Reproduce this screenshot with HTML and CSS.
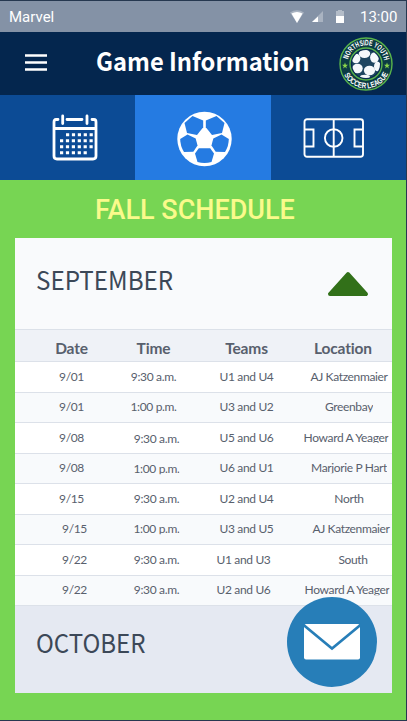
FILE: index.html
```html
<!DOCTYPE html>
<html lang="en">
<head>
<meta charset="utf-8">
<title>Game Information</title>
<link rel="stylesheet" href="styles.css">
</head>
<body>
<div class="screen">
  <div class="status">
    <span class="carrier">Marvel</span>
    <svg class="status-icons" width="60" height="16" viewBox="0 0 60 16">
      <path d="M0 3.5Q7 -1 14 3.5L7 14Z" fill="#a9b3c1"/>
      <path d="M1.5 4.5Q7 1.5 12.5 4.5L7 14Z" fill="#fff"/>
      <path d="M33 2V13H22Z" fill="#a9b3c1"/>
      <path d="M28 7.5V13H22Z" fill="#fff"/>
      <path d="M46 2H48V1H52V2H54V14H46Z" fill="#b3bcc8"/>
      <path d="M46 7H54V14H46Z" fill="#fff"/>
    </svg>
    <span class="clock">13:00</span>
  </div>
  <header class="header">
    <svg class="menu" width="22" height="17" viewBox="0 0 22 17"><path d="M0 1.5H22M0 8.5H22M0 15.5H22" stroke="#fff" stroke-width="2.4"/></svg>
    <h1>Game Information</h1>
    <svg class="logo" width="54" height="54" viewBox="0 0 54 54">
      <defs>
        <path id="arc-top" d="M9 30.5A18.4 18.4 0 1 1 45 30.5"/>
        <path id="arc-bottom" d="M2.6 27A24.4 24.4 0 0 0 51.4 27"/>
        <clipPath id="ball"><circle cx="27" cy="27" r="14"/></clipPath>
      </defs>
      <circle cx="27" cy="27" r="26" fill="#0b3b44" stroke="#58b34b" stroke-width="1.4"/>
      <circle cx="27" cy="27" r="16" fill="#092b50" stroke="#58b34b" stroke-width="1.4"/>
      <g clip-path="url(#ball)">
        <circle cx="27" cy="27" r="14" fill="#1d4560"/>
        <g fill="#f4f8fb">
          <ellipse cx="25.5" cy="16.8" rx="5.7" ry="4.2"/>
          <ellipse cx="17" cy="21.5" rx="4.4" ry="4.8"/>
          <ellipse cx="35.5" cy="20.5" rx="4.4" ry="5.2"/>
          <ellipse cx="18.5" cy="31.5" rx="5.2" ry="4.8"/>
          <ellipse cx="30.5" cy="33.5" rx="5.6" ry="4.8"/>
          <ellipse cx="38.5" cy="29.5" rx="3.5" ry="4.8"/>
          <ellipse cx="26" cy="39.7" rx="5" ry="2"/>
        </g>
      </g>
      <path d="M6 25.6L6.8 27.8H9L7.2 29.2L7.9 31.4L6 30.1L4.1 31.4L4.8 29.2L3 27.8H5.2ZM48 25.6L48.8 27.8H51L49.2 29.2L49.9 31.4L48 30.1L46.1 31.4L46.8 29.2L45 27.8H47.2Z" fill="#8bd64b"/>
      <text class="logo-text"><textPath href="#arc-top" startOffset="8" textLength="50" lengthAdjust="spacingAndGlyphs">NORTHSIDE YOUTH</textPath></text>
      <text class="logo-text"><textPath href="#arc-bottom" startOffset="11" textLength="55" lengthAdjust="spacingAndGlyphs">SOCCER LEAGUE</textPath></text>
    </svg>
  </header>
  <nav class="tabs">
    <div class="tab">
      <svg width="46" height="48" viewBox="0 0 46 48" fill="none" stroke="#fff" stroke-width="2.8" stroke-linecap="round">
        <path d="M6 5.5H4Q2 5.5 2 8V42Q2 45 5 45H41Q44 45 44 42V8Q44 5.5 42 5.5H40M15 5.5H30M10.7 2V9.5M35 2V9.5M2 14.5H44"/>
        <path d="M14 20.8H41M8 26.8H41M8 32.8H41M8 38.8H35" stroke-linecap="butt" stroke-width="3" stroke-dasharray="3.2 2.7"/>
      </svg>
    </div>
    <div class="tab active">
      <svg width="56" height="56" viewBox="0 0 56 56">
        <circle cx="27.5" cy="28" r="27.2" fill="#fff"/>
        <g fill="#257be2">
          <path d="M7.5 12L15.5 5L26.2 9.5V16.3L20 24L10 22Z"/>
          <path d="M47.5 12L39.5 5L28.8 9.5V16.3L35 24L45 22Z"/>
          <path d="M3.2 28L10.5 23.5L18.7 27.5L20.5 34.5L16.3 40.8L7 41Q3.2 35 3.2 28Z"/>
          <path d="M51.8 28L44.5 23.5L36.3 27.5L34.5 34.5L38.7 40.8L48 41Q51.8 35 51.8 28Z"/>
          <path d="M21.8 37.2H33.2L37 42.5L34.5 51Q27.5 53 20.5 51L18 42.5Z"/>
        </g>
      </svg>
    </div>
    <div class="tab">
      <svg width="62" height="40" viewBox="0 0 62 40" fill="none" stroke="#fff" stroke-width="1.9">
        <rect x="1.5" y="1.2" width="58.5" height="37.6" rx="2.5"/>
        <path d="M30.7 1V39M1.5 11.5H10.5V28.5H1.5M60 11.5H51.5V28.5H60"/>
        <circle cx="30.7" cy="20" r="8.8"/>
      </svg>
    </div>
  </nav>
  <main class="content">
    <h2>FALL SCHEDULE</h2>
    <section class="card">
      <div class="month">
        <h3>SEPTEMBER</h3>
        <svg width="42" height="26" viewBox="0 0 42 26"><path d="M21 3L39 23H3Z" fill="#327019" stroke="#327019" stroke-width="4" stroke-linejoin="round"/></svg>
      </div>
      <div class="row head"><span>Date</span><span class="l3">Time</span><span>Teams</span><span class="l6">Location</span></div>
      <div class="row"><span>9/01</span><span class="l3">9:30 a.m.</span><span>U1 and U4</span><span>AJ Katzenmaier</span></div>
      <div class="row"><span>9/01</span><span class="l3">1:00 p.m.</span><span>U3 and U2</span><span class="cut">Greenbay</span></div>
      <div class="row"><span>9/08</span><span class="d1">9:30 a.m.</span><span>U5 and U6</span><span class="l3 cut">Howard A Yeager</span></div>
      <div class="row"><span>9/08</span><span class="d1 cut">1:00 p.m.</span><span>U6 and U1</span><span class="cut">Marjorie P Hart</span></div>
      <div class="row"><span>9/15</span><span>9:30 a.m.</span><span>U2 and U4</span><span>North</span></div>
      <div class="row"><span class="r3">9/15</span><span class="cut">1:00 p.m.</span><span>U3 and U5</span><span class="r2">AJ Katzenmaier</span></div>
      <div class="row"><span class="r3">9/22</span><span>9:30 a.m.</span><span class="l3">U1 and U3</span><span class="r4">South</span></div>
      <div class="row"><span class="r3">9/22</span><span>9:30 a.m.</span><span class="l3">U2 and U6</span><span class="l2 cut">Howard A Yeager</span></div>
      <div class="month october"><h3>OCTOBER</h3></div>
      <div class="mail">
        <svg width="58" height="38" viewBox="0 0 58 38"><rect x="1" y="1" width="56" height="35.5" rx="2" fill="#fff"/><path d="M0 1.5L29 25.5L58 1.5" fill="none" stroke="#277eb8" stroke-width="2.6"/></svg>
      </div>
    </section>
  </main>
</div>
</body>
</html>
```

FILE: styles.css
```css
* { box-sizing: border-box; }
body { margin: 0; overflow: hidden; }
h1, h2, h3 { margin: 0; white-space: nowrap; }
.screen {
  width: 407px; height: 721px;
  display: flex; flex-direction: column;
  border: solid #263850; border-width: 1px 1px 1px 0;
  background: #77d553;
}
.status {
  height: 31px; flex: none;
  display: flex; align-items: center;
  padding: 0 8px 0 9px;
  background: #8492a6; color: #fff;
  font: 15px Roboto, sans-serif;
}
.status-icons { margin-left: auto; margin-right: 10px; }
.clock { width: 38px; font-size: 15px; }
.header {
  height: 63px; flex: none;
  display: flex; align-items: center;
  padding: 0 13px 0 25px;
  background: #04264e;
}
.menu { margin-top: -2px; }
h1 {
  width: 213px;
  margin-left: 49px; margin-top: -7px;
  color: #fff;
  font: 700 25.5px/36px "Noto Sans CJK SC", "Noto Sans", sans-serif;
  transform: scaleX(.93); transform-origin: left;
}
.logo { margin-left: auto; }
.logo-text { fill: #fff; font: 700 8px "Liberation Sans", sans-serif; }
.tabs { height: 85px; flex: none; display: grid; grid-template-columns: 135px 136px 135px; background: #0c4b95; }
.tab { display: flex; align-items: center; justify-content: center; }
.tab:first-child { padding-left: 14px; }
.tab:last-child { padding-right: 10px; padding-top: 1px; }
.tab.active { background: #257be2; padding-left: 3px; padding-top: 2px; }
.content { padding: 0 14px 0 15px; }
h2 {
  height: 58px; padding-left: 80px;
  color: #fafa8b;
  font: 500 27px/60px Roboto, sans-serif;
}
.card { position: relative; width: 377px; overflow: hidden; }
.month {
  height: 91px;
  display: flex; align-items: center; justify-content: space-between;
  padding: 0 23px 0 21px;
  background: #f9fafc; color: #3c4858;
}
h3 {
  margin-top: -10px;
  font: 400 26px/36px "Noto Sans CJK SC", "Noto Sans", sans-serif;
  transform: scaleX(.93); transform-origin: left;
}
.month svg { margin-top: 1px; }
.row {
  height: 30.5px;
  display: grid; grid-template-columns: 113px 57px 123px 82px;
  align-items: center;
  border-top: 1px solid #dce1e9;
  background: #fff; color: #58606d;
  font: 12px/16px Lato, sans-serif;
  letter-spacing: -.35px;
  white-space: nowrap;
}
.row:nth-child(even) { background: #f8fafc; }
.row span { position: relative; justify-self: center; }
.row.head { height: 32px; background: #eff2f7; font-size: 15.5px; font-weight: 700; line-height: 20px; padding-top: 5px; letter-spacing: -.15px; }
.l6 { left: -6px; }
.l3 { left: -3px; }
.l2 { left: -2px; }
.r2 { left: 2px; }
.r3 { left: 3px; }
.r4 { left: 4px; }
.d1 { top: 1px; }
.row .cut { clip-path: inset(0 0 3px 0); }
.october { height: 88px; background: #e5e9f2; border-top: 1px solid #dce1e9; }
.october h3 { margin-top: -15px; transform: scaleX(.925); }
.mail {
  position: absolute; right: 15px; bottom: 6px;
  width: 90px; height: 90px; border-radius: 50%;
  display: flex; align-items: center; justify-content: center;
  background: #277eb8;
}
```
